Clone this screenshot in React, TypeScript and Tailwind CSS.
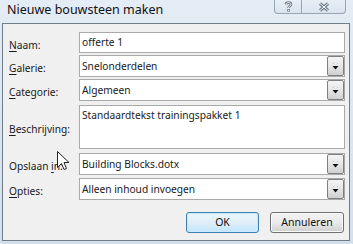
import React from "react";

const font = { fontFamily: '"Segoe UI", "Noto Sans", "Open Sans", sans-serif' };

function Label({ pre, u, post }: { pre?: string; u: string; post: string }) {
  return (
    <span className="text-[10.2px] text-[#1a1a1a] leading-none whitespace-nowrap">
      {pre}
      <span className="underline underline-offset-2">{u}</span>
      {post}
    </span>
  );
}

function Combo({ value }: { value: string }) {
  return (
    <div className="w-[266px] h-full border border-[#a9a9a9] bg-white flex items-stretch">
      <div className="flex-1 flex items-center pl-[2px] text-[10.2px] text-[#1a1a1a] leading-none">{value}</div>
      <div className="w-[17px] border border-[#7e7f80] rounded-[2px] bg-gradient-to-b from-[#f5f5f5] via-[#e6e6e6] to-[#cfcfcf] flex flex-col items-center justify-center">
        <svg width="7" height="7" viewBox="0 0 7 7">
          <rect x="1" y="0" width="1" height="1" fill="#c8c8c8" />
          <rect x="5" y="0" width="1" height="1" fill="#c8c8c8" />
          <path d="M0.5 3h6L3.5 6.5z" fill="#111" />
        </svg>
      </div>
    </div>
  );
}

function Row({ label, children, h, mt }: { label: React.ReactNode; children: React.ReactNode; h: string; mt: string }) {
  return (
    <div className={`flex items-center ${h} ${mt}`}>
      <div className="w-[76px] shrink-0 pl-[6px]">{label}</div>
      <div className="h-full">{children}</div>
    </div>
  );
}

export default function App() {
  return (
    <div style={font} className="relative w-[353px] h-[244px] overflow-hidden bg-gradient-to-b from-[#e4ecf5] to-[#d3dfeb] flex flex-col">
      <div className="h-[23px] flex items-start justify-between">
        <div className="pl-[7px] pt-[4px] text-[12.5px] leading-none text-[#111]">Nieuwe bouwsteen maken</div>
        <div className="flex mr-[7px] h-[14px] border border-t-0 border-[#97a6b6] rounded-b-[4px] bg-gradient-to-b from-[#e8eff6] to-[#d9e4ef]">
          <div className="w-[27px] flex items-center justify-center border-r border-[#97a6b6]">
            <svg width="9" height="11" viewBox="0 0 9 11">
              <path d="M2 3.5 C2 1 7 1 7 3.5 C7 5.5 4.5 5 4.5 7" fill="none" stroke="#6b7a8a" strokeWidth="2.6" />
              <path d="M2 3.5 C2 1 7 1 7 3.5 C7 5.5 4.5 5 4.5 7" fill="none" stroke="#fff" strokeWidth="0.9" />
              <rect x="3.2" y="8" width="2.6" height="2.6" fill="#6b7a8a" />
              <rect x="4" y="8.8" width="1" height="1" fill="#fff" />
            </svg>
          </div>
          <div className="w-[43px] flex items-center justify-center">
            <svg width="12" height="10" viewBox="0 0 12 10">
              <path d="M2 1.5L10 8.5M10 1.5L2 8.5" stroke="#6b7a8a" strokeWidth="3" />
              <path d="M2 1.5L10 8.5M10 1.5L2 8.5" stroke="#fff" strokeWidth="1" />
            </svg>
          </div>
        </div>
      </div>
      <div className="ml-[2px] w-[348px] h-[218px] border border-[#6f7c89] bg-[#f0f0f0] flex flex-col pt-[8px]">
        <Row h="h-[21px]" mt="mt-0" label={<Label u="N" post="aam:" />}>
          <div className="w-[266px] h-full border border-[#a9a9a9] bg-white flex items-center pl-[2px] text-[10.2px] leading-none text-[#1a1a1a]">offerte 1</div>
        </Row>
        <Row h="h-[22px]" mt="mt-[2px]" label={<Label u="G" post="alerie:" />}>
          <Combo value="Snelonderdelen" />
        </Row>
        <Row h="h-[22px]" mt="mt-[2px]" label={<Label u="C" post="ategorie:" />}>
          <Combo value="Algemeen" />
        </Row>
        <Row h="h-[44px]" mt="mt-[4px]" label={<Label u="B" post="eschrijving:" />}>
          <div className="w-[266px] h-full border border-[#a9a9a9] bg-white pl-[2px] pt-[4px] text-[10.2px] leading-none text-[#1a1a1a]">Standaardtekst trainingspakket 1</div>
        </Row>
        <Row h="h-[22px]" mt="mt-[4px]" label={<Label pre="Opslaan " u="i" post="n:" />}>
          <Combo value="Building Blocks.dotx" />
        </Row>
        <Row h="h-[22px]" mt="mt-[3px]" label={<Label u="O" post="pties:" />}>
          <Combo value="Alleen inhoud invoegen" />
        </Row>
        <div className="flex justify-end gap-[11px] pr-[5px] mt-[12px]">
          <button className="w-[73px] h-[21px] rounded-[3px] border border-[#3c7fb1] bg-gradient-to-b from-[#eaf6fd] via-[#e2eef7] to-[#bee6fd] text-[10.5px] leading-none text-[#111] shadow-[inset_0_0_0_1px_#cbe9fb]">OK</button>
          <button className="w-[74px] h-[21px] rounded-[3px] border border-[#707070] bg-gradient-to-b from-[#f2f2f2] via-[#ebebeb] to-[#cfcfcf] text-[10.5px] leading-none text-[#111] shadow-[inset_0_0_0_1px_#fafafa]">Annuleren</button>
        </div>
      </div>
      <svg className="absolute left-[57px] top-[151px]" width="13" height="20" viewBox="0 0 13 20">
        <path d="M0.5 0.5 L0.5 16.5 L4.5 12.5 L7 18.5 L9.5 17.5 L7 11.5 L12 11.5 Z" fill="#fff" stroke="#222" strokeWidth="1" strokeLinejoin="miter" />
      </svg>
    </div>
  );
}
